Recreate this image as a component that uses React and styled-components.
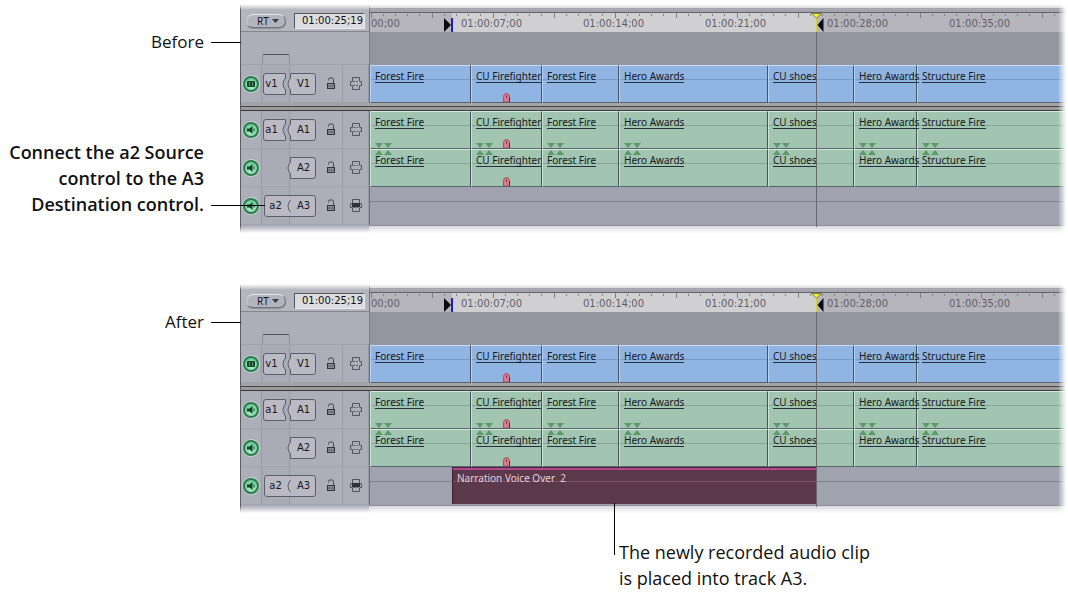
import React from "react"
import styled, { createGlobalStyle } from "styled-components"

const CLIPS = [
  { name: "Forest Fire", width: 101 },
  { name: "CU Firefighter", width: 71, marker: true },
  { name: "Forest Fire", width: 77 },
  { name: "Hero Awards", width: 149 },
  { name: "CU shoes", width: 86 },
  { name: "Hero Awards", width: 63 },
  { name: "Structure Fire" },
]

const TIMES = [
  "01:00:07;00",
  "01:00:14;00",
  "01:00:21;00",
  "01:00:28;00",
  "01:00:35;00",
]

/* ---------- icons ---------- */

const FilmIcon = () => (
  <svg width='8' height='6' viewBox='0 0 8 6'>
    <rect width='8' height='6' rx='1' fill='#14452b' />
    <path d='M2.5 1v4M5.5 1v4' stroke='#6cc48f' strokeWidth='0.7' />
  </svg>
)

const SpeakerIcon = () => (
  <svg width='8' height='8' viewBox='0 0 8 8'>
    <path d='M0 2.5h2.5L5.5 0v8L2.5 5.5H0z' fill='#12452a' />
    <path d='M7 2.5v3' stroke='#12452a' />
  </svg>
)

const LockIcon = () => (
  <svg width='10' height='13' viewBox='0 0 10 13'>
    <path
      d='M2.5 3.5V2.5Q2.5 1 4 1H6Q7.5 1 7.5 2.5V7'
      fill='none'
      stroke='#44464f'
    />
    <rect x='1.5' y='6.5' width='7' height='5' fill='#8b8d97' stroke='#33353d' />
    <path d='M2 9h6' stroke='#5a5c65' />
  </svg>
)

const AutoSelectIcon = ({ filled }) => (
  <svg width='12' height='13' viewBox='0 0 12 13'>
    <path
      d='M2.5 4V.5h7V4M2.5 9v3.5h7V9'
      fill='none'
      stroke='#50525c'
    />
    <path d='M2.5 4.5h-2v4h2M9.5 4.5h2v4h-2' fill='none' stroke='#50525c' />
    <path d='M3 4.500h6M3 8.500h6' stroke='#5c5e68' strokeDasharray='2 1' />
    {filled && <rect x='2' y='4' width='8' height='4' fill='#2f3138' />}
  </svg>
)

const SourceShape = ({ joined }) => (
  <svg width='28' height='24' viewBox='0 0 28 24'>
    <path
      d={
        joined
          ? "M28 1.5H5Q2.5 1.5 2.5 4v16q0 2.5 2.5 2.5h23z"
          : "M23.5 1.5H4Q1.5 1.5 1.5 4v16q0 2.5 2.5 2.5h19.5v-4.5q-5-6 0-12z"
      }
      fill='#b9bac3'
    />
    <path
      d={
        joined
          ? "M28 1.5H5Q2.5 1.5 2.5 4v16q0 2.5 2.5 2.5h23"
          : "M23.5 6V1.5H4Q1.5 1.5 1.5 4v16q0 2.5 2.5 2.5h19.5v-4.5q-5-6 0-12"
      }
      fill='none'
      stroke='#5b5d68'
    />
  </svg>
)

const DestShape = ({ joined }) => (
  <svg width='30' height='24' viewBox='0 0 30 24'>
    <path
      d='M3.5 1.5H26q2.5 0 2.5 2.5v16q0 2.5-2.5 2.5H3.5v-4.5q-5-6 0-12z'
      fill='#b9bac3'
    />
    <path
      d={
        joined
          ? "M1 1.5H26q2.5 0 2.5 2.5v16q0 2.5-2.5 2.5H1M3.5 18q-5-6 0-12"
          : "M3.5 1.5H26q2.5 0 2.5 2.5v16q0 2.5-2.5 2.5H3.5v-4.5q-5-6 0-12z"
      }
      fill='none'
      stroke='#5b5d68'
    />
  </svg>
)

const MarkerIcon = () => (
  <svg width='7' height='9' viewBox='0 0 7 9'>
    <path d='M.5 9V3.5Q.8.5 3.5.5T6.5 3.5V9z' fill='#e0788a' stroke='#a8505f' />
    <path d='M3.5 2.5v2M6.5 4v5' stroke='#5c2030' />
  </svg>
)

const ThroughEdits = ({ up }) => (
  <svg width='17' height='5' viewBox='0 0 17 5'>
    <path
      d={up ? "M0 5L4 0l4 5zM9 5l4-5 4 5z" : "M0 0h8L4 5zM9 0h8l-4 5z"}
      fill='#5d9a69'
    />
  </svg>
)

/* ---------- timeline ---------- */

const Track = ({ kind, source, dest, joined, edits, children }) => (
  <TrackRow>
    <TrackHead>
      <Cell>
        <Visibility type='button' aria-label={`Toggle track ${dest}`}>
          {kind === "video" ? <FilmIcon /> : <SpeakerIcon />}
        </Visibility>
      </Cell>
      <Cell $well>
        {source && (
          <Patch type='button' $joined={joined}>
            <SourceShape joined={joined} />
            <span>{source}</span>
          </Patch>
        )}
      </Cell>
      <Cell $split>
        <Patch type='button' $dest>
          <DestShape joined={joined} />
          <span>{dest}</span>
        </Patch>
        <IconButton type='button' aria-label={`Lock track ${dest}`}>
          <LockIcon />
        </IconButton>
      </Cell>
      <Cell>
        <IconButton type='button' aria-label={`Auto select ${dest}`}>
          <AutoSelectIcon filled={joined} />
        </IconButton>
      </Cell>
    </TrackHead>
    <Lane>
      {children}
      {edits &&
        CLIPS.map((clip, i) => (
          <Clip key={i} $kind={kind} $width={clip.width}>
            <ClipName>{clip.name}</ClipName>
            {kind === "audio" && (
              <Edits $top={edits === "up"}>
                <ThroughEdits up={edits === "up"} />
              </Edits>
            )}
            {clip.marker && (
              <Marker>
                <MarkerIcon />
              </Marker>
            )}
          </Clip>
        ))}
    </Lane>
  </TrackRow>
)

const Timeline = ({ narration }) => (
  <Panel>
    <Header>
      <HeaderLeft>
        <RtWrap>
          <RtSelect aria-label='RT'>
            <option>RT</option>
          </RtSelect>
          <svg width='7' height='4' viewBox='0 0 7 4'>
            <path d='M0 0h7L3.5 4z' fill='#3a3c44' />
          </svg>
        </RtWrap>
        <Timecode aria-label='Current timecode' defaultValue='01:00:25;19' />
      </HeaderLeft>
      <Ruler>
        <Selected />
        <Ticks>
          <defs>
            <pattern
              id={narration ? "ticks-after" : "ticks-before"}
              width='61'
              height='5'
              patternUnits='userSpaceOnUse'
            >
              <path
                d='M1.5 0v5M13.5 1v2M25.5 1v2M37.5 1v2M49.5 1v2'
                stroke='#808087'
              />
            </pattern>
          </defs>
          <rect
            width='100%'
            height='5'
            fill={`url(#${narration ? "ticks-after" : "ticks-before"})`}
          />
        </Ticks>
        <Times>
          <Time $first>00;00</Time>
          {TIMES.map((time) => (
            <Time key={time}>{time}</Time>
          ))}
        </Times>
      </Ruler>
    </Header>
    <Spacer>
      <TrackHead $plain>
        <Cell $plain />
        <Well />
      </TrackHead>
      <Empty />
    </Spacer>
    <Track kind='video' source='v1' dest='V1' edits='none' />
    <Divider />
    <Track kind='audio' source='a1' dest='A1' edits='down' />
    <Track kind='audio' dest='A2' edits='up' />
    <Track kind='audio' source='a2' dest='A3' joined>
      {narration && <Narration>Narration Voice Over&nbsp; 2</Narration>}
    </Track>
    <Footer>
      <FooterHead />
      <FooterLane />
    </Footer>
    <InPoint width='9' height='14' viewBox='0 0 9 14'>
      <path d='M0 0l7 7-7 7z' fill='#0a0a10' />
      <path d='M8 0v14' stroke='#1d1dd0' strokeWidth='2' />
    </InPoint>
    <Playhead />
    <PlayheadTop width='13' height='19' viewBox='0 0 13 19'>
      <path d='M5.5 5v14' stroke='#d8d23a' />
      <path d='M.5.5h10l-5 4.5z' fill='#f4ee3c' stroke='#6e6a20' strokeWidth='0.8' />
      <path d='M12.5 5v14l-6-7z' fill='#0a0a10' />
    </PlayheadTop>
    <Fade />
  </Panel>
)

const App = () => {
  return (
    <Page>
      <GlobalStyle />
      <Figure>
        <Notes>
          <Note>Before</Note>
          <Note $strong>
            Connect the a2 Source
            <br />
            control to the A3
            <br />
            Destination control.
          </Note>
        </Notes>
        <Timeline />
        <Leader $top={42} $width={30} />
        <Leader $top={205} $width={54} />
      </Figure>
      <Figure>
        <Notes>
          <Note>After</Note>
        </Notes>
        <Timeline narration />
        <Leader $top={42} $width={30} />
      </Figure>
      <Caption>
        The newly recorded audio clip
        <br />
        is placed into track A3.
      </Caption>
    </Page>
  )
}

export default App

const GlobalStyle = createGlobalStyle`
  * {
    box-sizing: border-box;
  }

  body {
    margin: 0;
    background: #fff;
  }

  svg {
    display: block;
  }
`

const Page = styled.main`
  display: flex;
  flex-direction: column;
  font-family: "Open Sans", "Noto Sans", sans-serif;
  font-size: 18px;
  line-height: 26px;
  color: #111;
`

const Figure = styled.section`
  position: relative;
  display: grid;
  grid-template-columns: 204px minmax(0, 1fr);
  column-gap: 36px;
  padding: 4px 2px 47px 0;
`

const Notes = styled.div`
  display: flex;
  flex-direction: column;
  gap: 84px;
  padding-top: 25px;
  text-align: right;
  white-space: nowrap;
`

const Note = styled.p`
  margin: 0;
  font-size: ${({ $strong }) => ($strong ? 18 : 17)}px;
  font-weight: ${({ $strong }) => ($strong ? 600 : 400)};
`

const Leader = styled.span`
  position: absolute;
  z-index: 3;
  left: 211px;
  top: ${({ $top }) => $top}px;
  width: ${({ $width }) => $width}px;
  height: 1px;
  background: #000;
`

const Caption = styled.p`
  position: relative;
  z-index: 3;
  margin: -21px 0 0 619px;

  &::before {
    content: "";
    position: absolute;
    left: -5px;
    top: -36px;
    width: 1px;
    height: 52px;
    background: #000;
  }
`

const Panel = styled.div`
  position: relative;
  border-left: 1px solid #5c5d66;
  font-family: "Noto Sans", "Open Sans", sans-serif;
  font-size: 10px;
  line-height: 11px;
  color: #15171c;
`

const Header = styled.div`
  display: grid;
  grid-template-columns: 128px minmax(0, 1fr);
  height: 28px;
`

const HeaderLeft = styled.div`
  display: flex;
  align-items: center;
  justify-content: space-between;
  padding: 6px 4px 0 5px;
  background: #b4b5bd;
  border-bottom: 1px solid #85868f;
`

const RtWrap = styled.div`
  display: flex;
  align-items: center;
  width: 40px;
  height: 14px;
  padding-right: 6px;
  border: 1px solid #74757f;
  border-top-color: #e6e6ec;
  border-left-color: #d6d7de;
  border-radius: 7px;
  background: #b2b3bc;
  box-shadow: 0 1px 1px #8c8d96;
`

const RtSelect = styled.select`
  flex: 1;
  min-width: 0;
  height: 12px;
  padding: 0 0 0 10px;
  border: 0;
  appearance: none;
  background: none;
  color: inherit;
  font: 10px/12px "Noto Sans", sans-serif;
`

const Timecode = styled.input`
  width: 71px;
  height: 16px;
  padding: 0 1px;
  border: 1px solid #ececf0;
  border-top-color: #55565e;
  border-left-color: #55565e;
  border-radius: 0;
  background: #dcdce0;
  color: #111;
  text-align: right;
  font: 10px/14px "DejaVu Sans", sans-serif;
`

const Ruler = styled.div`
  position: relative;
  padding-top: 9px;
  background: #b5b5bb;
  border-top: 4px solid #c8c8ce;
  border-left: 1px solid #73747d;
  box-shadow: inset 0 1px #85868f, inset 0 4px #a3a3ad, inset 0 5px #62636d;
`

const Selected = styled.div`
  position: absolute;
  left: 82px;
  top: 5px;
  width: 364px;
  bottom: 0;
  background: #d0d0d2;
`

const Ticks = styled.svg`
  position: absolute;
  left: 0;
  top: 5px;
  width: 100%;
  height: 5px;
`

const Times = styled.div`
  position: relative;
  display: flex;
  padding-left: 1px;
  overflow: hidden;
`

const Time = styled.span`
  flex: none;
  width: ${({ $first }) => ($first ? 90 : 122)}px;
  color: #5f5f66;
  font: 10px/13px "DejaVu Sans", sans-serif;
`

const Spacer = styled.div`
  display: grid;
  grid-template-columns: 128px minmax(0, 1fr);
  height: 33px;
`

const TrackHead = styled.div`
  display: grid;
  grid-template-columns: 21px 28px 53px 26px;
  background: #acaeb9;
  border-bottom: 1px solid #a0a2ad;
  align-items: ${({ $plain }) => ($plain ? "end" : "stretch")};
`

const Well = styled.div`
  height: 10px;
  border: 1px solid #8d8f9a;
  border-top-color: #4e505a;
  border-bottom: 0;
  border-radius: 2px 2px 0 0;
`

const Empty = styled.div`
  background: #94959e;
  border-left: 1px solid #7b7c86;
`

const TrackRow = styled.div`
  display: grid;
  grid-template-columns: 128px minmax(0, 1fr);
  height: 38px;
`

const Cell = styled.div`
  display: flex;
  align-items: center;
  justify-content: ${({ $split }) => ($split ? "space-between" : "center")};
  padding-right: ${({ $split }) => ($split ? 6 : 0)}px;
  background: ${({ $well }) => ($well ? "#a9abb6" : "none")};
  border-right: ${({ $plain }) => ($plain ? 0 : 1)}px solid #989aa6;
`

const Visibility = styled.button`
  display: grid;
  place-items: center;
  flex: none;
  width: 16px;
  height: 16px;
  padding: 0;
  border: 2px solid #2c7d50;
  border-radius: 50%;
  background: radial-gradient(circle at 50% 70%, #b4f0cb, #58bf84);
  box-shadow: 0 0 0 1px #c5d3cd;
`

const Patch = styled.button`
  position: relative;
  flex: none;
  width: ${({ $dest }) => ($dest ? 30 : 28)}px;
  height: 24px;
  margin-left: ${({ $dest }) => ($dest ? -3 : 0)}px;
  padding: 0;
  border: 0;
  background: none;
  color: inherit;
  font: 10px/12px "DejaVu Sans", sans-serif;

  svg {
    position: absolute;
    inset: 0;
  }

  span {
    position: relative;
    display: block;
    padding-left: ${({ $dest }) => ($dest ? 3 : 0)}px;
    padding-right: ${({ $dest, $joined }) => ($dest || $joined ? 0 : 8)}px;
  }
`

const IconButton = styled.button`
  padding: 0;
  border: 0;
  background: none;
`

const Lane = styled.div`
  display: flex;
  min-width: 0;
  background: linear-gradient(#7e818d, #7e818d) 0 14px / 100% 1px no-repeat #a0a3af;
  border-left: 1px solid #6b6d77;
`

const Clip = styled.div`
  position: relative;
  flex: ${({ $width }) => ($width ? `0 0 ${$width}px` : "1 1 0")};
  min-width: 0;
  padding: 5px 0 0 4px;
  border-top: 1px solid ${({ $kind }) => ($kind === "video" ? "#c4dcf5" : "#d5e8dc")};
  border-left: 1px solid ${({ $kind }) => ($kind === "video" ? "#b7d2f0" : "#cbe2d4")};
  border-right: 1px solid #47545c;
  border-bottom: 1px solid #56656a;
  background: ${({ $kind }) =>
    $kind === "video"
      ? "linear-gradient(#789cc8, #789cc8) 0 13px / 100% 1px no-repeat #90b5e3"
      : "linear-gradient(#86a795, #86a795) 0 13px / 100% 1px no-repeat #a2c5b1"};
`

const ClipName = styled.span`
  position: relative;
  z-index: 1;
  display: inline-block;
  height: 12px;
  border-bottom: 1px solid #262f3c;
  white-space: nowrap;
`

const Edits = styled.span`
  position: absolute;
  left: 4px;
  ${({ $top }) => ($top ? "top: 0;" : "bottom: 0;")}
`

const Marker = styled.span`
  position: absolute;
  left: 31px;
  bottom: 0;
`

const Narration = styled.div`
  width: 364px;
  margin: 0 0 1px 82px;
  padding: 5px 4px 0;
  border-top: 1px solid #54203e;
  border-left: 1px solid #3f2030;
  background: linear-gradient(#7e5068, #7e5068) 0 13px / 100% 1px no-repeat #5c384b;
  box-shadow: inset 0 2px #b04a90;
  color: #e2d3da;
`

const Divider = styled.div`
  height: 8px;
  background: linear-gradient(
    #a3a3a8 0 3px,
    #45454a 3px 4px,
    #9b9a99 4px 7px,
    #3d3c3f 7px 8px
  );
`

const Footer = styled.div`
  display: grid;
  grid-template-columns: 128px minmax(0, 1fr);
  height: 8px;
`

const FooterHead = styled.div`
  background: #acaeb9;
`

const FooterLane = styled.div`
  background: #d6d7db;
  border-top: 1px solid #8d8e98;
`

const InPoint = styled.svg`
  position: absolute;
  left: 203px;
  top: 14px;
`

const Playhead = styled.span`
  position: absolute;
  z-index: 2;
  left: 575px;
  top: 28px;
  bottom: 6px;
  width: 1px;
  background: #65686d;
`

const PlayheadTop = styled.svg`
  position: absolute;
  left: 570px;
  top: 9px;
`

const Fade = styled.span`
  position: absolute;
  z-index: 2;
  inset: 0 0 0 -1px;
  pointer-events: none;
  background: linear-gradient(#fff, #fff0) 0 0 / 100% 6px no-repeat,
    linear-gradient(#fff0, #fff) 0 100% / 100% 7px no-repeat,
    linear-gradient(90deg, #fff0, #fff) 100% 0 / 8px 100% no-repeat;
`
